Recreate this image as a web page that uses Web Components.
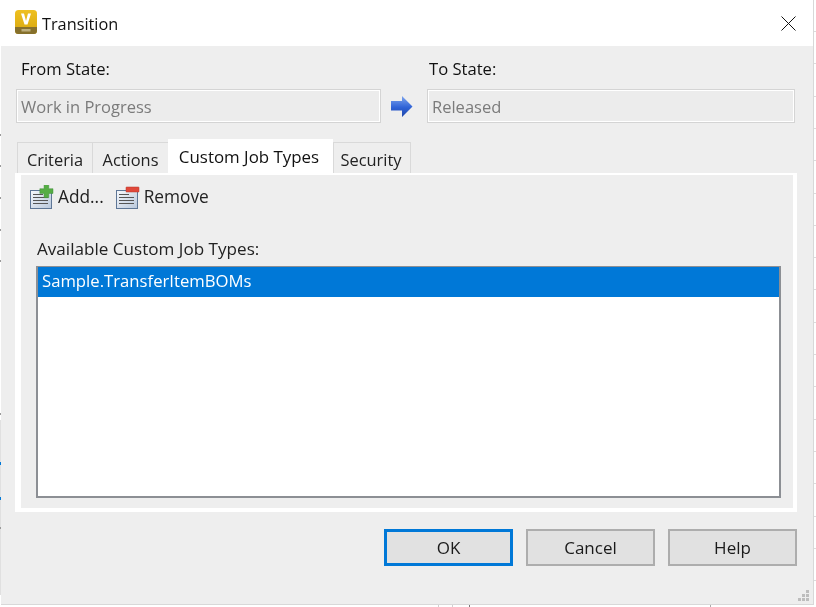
<!DOCTYPE html>
<html>
<head>
<meta charset="utf-8">
<title>Transition</title>
<style>
  html, body { margin: 0; height: 100%; background: #fff; overflow: hidden; }
  body { font-family: "Open Sans", "Noto Sans", sans-serif; color: #1a1a1a; }
</style>
</head>
<body>
<window-backdrop></window-backdrop>
<transition-dialog></transition-dialog>

<script>
// the window behind the dialog only shows as small ticks along the edges
class WindowBackdrop extends HTMLElement {
  constructor() {
    super();
    const shadow = this.attachShadow({ mode: 'open' });
    const tick = (x, y, w, h, c) => `<i style="left:${x}px;top:${y}px;width:${w}px;height:${h}px;background:${c}"></i>`;
    let ticks = tick(0, 420, 1, 175, '#e0e0e0');
    [134, 165, 197, 229, 260, 413, 527].forEach(y => { ticks += tick(0, y, 1, 2, '#9a9a9a'); });
    [462, 497].forEach(y => { ticks += tick(0, y, 1, 3, '#0078d7'); });
    for (let y = 31; y < 607; y += 32.3) ticks += tick(813, Math.round(y), 3, 1, '#dcdcdc');
    ticks += tick(438, 605, 1, 2, '#d0d0d0') + tick(452, 605, 1, 2, '#d0d0d0');
    ticks += tick(469, 605, 1, 2, '#777') + tick(710, 605, 1, 2, '#aaa');
    shadow.innerHTML = `
      <style>
        :host { position: fixed; inset: 0; display: block; }
        i { position: absolute; display: block; }
      </style>
      ${ticks}
    `;
  }
}
customElements.define('window-backdrop', WindowBackdrop);

class TitleBar extends HTMLElement {
  constructor() {
    super();
    const shadow = this.attachShadow({ mode: 'open' });
    shadow.innerHTML = `
      <style>
        :host {
          display: flex;
          align-items: center;
          height: 46px;
          padding: 0 17px 0 13px;
          background: #fff;
          box-sizing: border-box;
        }
        svg { display: block; }
        .logo { margin-top: -2px; }
        .title { margin: 1px 0 0 5px; font-size: 16.300px; color: #111; }
        .close { margin-left: auto; }
      </style>
      <svg class="logo" width="23" height="24" viewBox="0 0 23 24">
        <defs>
          <linearGradient id="gold" x1="0" y1="0" x2="0" y2="1">
            <stop offset="0" stop-color="#efc020"/>
            <stop offset="1" stop-color="#d6a60e"/>
          </linearGradient>
        </defs>
        <rect x="1" y="0" width="22" height="24" rx="3.500" fill="url(#gold)"/>
        <path d="M1 17h22v3.500a3.500 3.500 0 0 1-3.500 3.500h-15A3.500 3.500 0 0 1 1 20.500z" fill="#86702c"/>
        <path d="M7 3.500h3l2 7.500 2-7.500h3l-3.500 11h-3z" fill="#fff"/>
        <rect x="7.500" y="19" width="9" height="2.500" fill="#bdae7c"/>
      </svg>
      <span class="title"><slot></slot></span>
      <svg class="close" width="15" height="15" viewBox="0 0 15 15">
        <path d="M.5.5l14 14M14.500.5l-14 14" stroke="#111" stroke-width="1" fill="none"/>
      </svg>
    `;
  }
}
customElements.define('title-bar', TitleBar);

class StateField extends HTMLElement {
  constructor() {
    super();
    const shadow = this.attachShadow({ mode: 'open' });
    shadow.innerHTML = `
      <style>
        :host { display: block; }
        .label { height: 43px; padding: 11px 0 0 var(--label-x, 5px); box-sizing: border-box; font-size: 16.600px; color: #111; }
        .box {
          height: 34px;
          box-sizing: border-box;
          border: 1px solid #d4d4d4;
          outline: 1px solid #fff;
          outline-offset: -2px;
          background: #ececec;
          padding: 0 4px;
          display: flex;
          align-items: center;
          font-size: 16.500px;
          color: #7b7b7b;
        }
      </style>
      <div class="label"></div>
      <div class="box"><slot></slot></div>
    `;
    shadow.querySelector('.label').textContent = this.getAttribute('label');
  }
}
customElements.define('state-field', StateField);

class TabStrip extends HTMLElement {
  constructor() {
    super();
    const shadow = this.attachShadow({ mode: 'open' });
    shadow.innerHTML = `
      <style>
        :host { display: flex; align-items: flex-end; height: 34px; font-size: 16.400px; }
        .tab {
          height: 31px;
          box-sizing: border-box;
          border: 1px solid #d9d9d9;
          border-bottom: 0;
          border-right: 0;
          background: #eee;
          display: flex;
          align-items: center;
          justify-content: center;
          padding-top: 3px;
          color: #222;
        }
        .tab:last-child { border-right: 1px solid #d9d9d9; padding-right: 2px; }
        .on { height: 36px; margin-bottom: -2px; position: relative; background: #fff; border: 0; padding: 0 3px 2px 0; font-size: 16.900px; color: #111; }
      </style>
      <div class="tab" style="width:75px">Criteria</div>
      <div class="tab" style="width:76px">Actions</div>
      <div class="tab on" style="width:165px">Custom Job Types</div>
      <div class="tab" style="width:78px">Security</div>
    `;
  }
}
customElements.define('tab-strip', TabStrip);

class ToolButton extends HTMLElement {
  constructor() {
    super();
    const mark = this.getAttribute('kind') === 'add'
      ? `<path d="M15.500 0h5v4.500H25v5h-4.500V14h-5V9.500H11v-5h4.500z" fill="#55ad45" stroke="#3d8a38" stroke-width=".5" transform="translate(.5 -.5) scale(.94)"/>`
      : `<rect x="11" y="2" width="13" height="5" rx=".5" fill="#e0483a" stroke="#b5342a" stroke-width=".5"/>`;
    const shadow = this.attachShadow({ mode: 'open' });
    shadow.innerHTML = `
      <style>
        :host { display: flex; align-items: center; gap: 4px; font-size: 17.300px; color: #222; }
        svg { display: block; }
        span { margin-top: -2px; }
      </style>
      <svg width="25" height="25" viewBox="0 0 25 25">
        <defs>
          <linearGradient id="page" x1="0" y1="0" x2="1" y2="1">
            <stop offset="0" stop-color="#f6f8fb"/>
            <stop offset="1" stop-color="#b9c8dc"/>
          </linearGradient>
        </defs>
        <rect x="1.500" y="5.500" width="21" height="18" fill="url(#page)" stroke="#5e7696"/>
        <path d="M4 9.500h10M4 12.500h15M4 15.500h15M4 18.500h15" stroke="#555" stroke-width="1"/>
        ${mark}
      </svg>
      <span><slot></slot></span>
    `;
  }
}
customElements.define('tool-button', ToolButton);

class JobList extends HTMLElement {
  constructor() {
    super();
    const shadow = this.attachShadow({ mode: 'open' });
    shadow.innerHTML = `
      <style>
        :host {
          display: block;
          height: 232px;
          box-sizing: border-box;
          border: 2px solid #8c8f94;
          border-top-width: 1px;
          background: #fff;
        }
        ::slotted(*) {
          display: block;
          height: 30px;
          line-height: 28px;
          padding-left: 4px;
          background: #0078d7;
          color: #fff;
          font-size: 16.700px;
        }
      </style>
      <slot></slot>
    `;
  }
}
customElements.define('job-list', JobList);

class DialogButton extends HTMLElement {
  constructor() {
    super();
    const shadow = this.attachShadow({ mode: 'open' });
    shadow.innerHTML = `
      <style>
        :host {
          display: flex;
          align-items: center;
          justify-content: center;
          width: 129px;
          height: 37px;
          box-sizing: border-box;
          border: 2px solid #adadad;
          background: #e1e1e1;
          font-size: 17px;
          color: #1a1a1a;
        }
        :host([primary]) { border: 3px solid #0078d7; }
      </style>
      <slot></slot>
    `;
  }
}
customElements.define('dialog-button', DialogButton);

class TransitionDialog extends HTMLElement {
  constructor() {
    super();
    const shadow = this.attachShadow({ mode: 'open' });
    shadow.innerHTML = `
      <style>
        :host {
          display: block;
          position: relative;
          width: 813px;
          height: 605px;
          box-sizing: border-box;
          margin-left: 1px;
          background: #eee;
          border: solid #d8d8d8;
          border-width: 0 1px 1px 0;
          filter: blur(.35px);
        }
        .states {
          display: grid;
          grid-template-columns: 365px 46px 368px;
          padding-left: 15px;
        }
        .arrow { align-self: end; height: 34px; display: flex; align-items: center; padding-left: 10px; }
        .arrow svg { display: block; }
        .to { --label-x: 2px; }
        .tabs { margin: 16px 0 0 16px; }
        .panel {
          margin-left: 14px;
          width: 782px;
          height: 339px;
          box-sizing: border-box;
          border: solid #fff;
          border-width: 2px 4px 4px 6px;
          padding: 8px 12px 10px 15px;
        }
        .tools { display: flex; gap: 11px; margin-left: -7px; height: 29px; }
        .caption { margin-top: 26px; height: 28px; padding-left: 1px; font-size: 17.100px; color: #222; line-height: 22px; }
        .buttons { display: flex; justify-content: flex-end; gap: 13px; margin: 17px 16px 0 0; }
        .grip { position: absolute; left: 797px; top: 590px; }
      </style>
      <title-bar>Transition</title-bar>
      <div class="states">
        <state-field label="From State:">Work in Progress</state-field>
        <div class="arrow">
          <svg width="22" height="21" viewBox="0 0 22 21">
            <defs>
              <linearGradient id="blue" x1="0" y1="0" x2="0" y2="1">
                <stop offset="0" stop-color="#7fa6ee"/>
                <stop offset=".55" stop-color="#2f62d6"/>
                <stop offset="1" stop-color="#1f46a8"/>
              </linearGradient>
            </defs>
            <path d="M0 5h11V0l10.500 10.500L11 21v-6.500H0z" fill="url(#blue)"/>
          </svg>
        </div>
        <state-field class="to" label="To State:">Released</state-field>
      </div>
      <tab-strip class="tabs"></tab-strip>
      <div class="panel">
        <div class="tools">
          <tool-button kind="add">Add...</tool-button>
          <tool-button kind="remove">Remove</tool-button>
        </div>
        <div class="caption">Available Custom Job Types:</div>
        <job-list><div>Sample.TransferItemBOMs</div></job-list>
      </div>
      <div class="buttons">
        <dialog-button primary>OK</dialog-button>
        <dialog-button>Cancel</dialog-button>
        <dialog-button>Help</dialog-button>
      </div>
      <svg class="grip" width="12" height="12" viewBox="0 0 12 12" fill="#bdbdbd">
        <rect x="8" y="0" width="3" height="3"/>
        <rect x="4" y="4" width="3" height="3"/><rect x="8" y="4" width="3" height="3"/>
        <rect x="0" y="8" width="3" height="3"/><rect x="4" y="8" width="3" height="3"/><rect x="8" y="8" width="3" height="3"/>
      </svg>
    `;
  }
}
customElements.define('transition-dialog', TransitionDialog);
</script>
</body>
</html>
